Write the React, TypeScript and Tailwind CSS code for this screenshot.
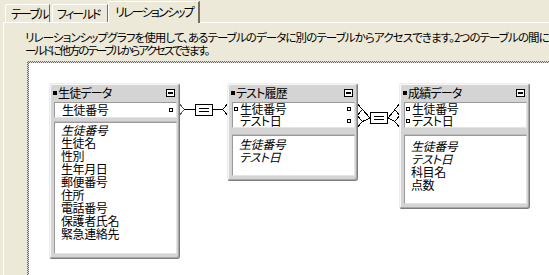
import React from "react";

type KeyRow = { text: string; l?: boolean; r?: boolean };
type BodyRow = { text: string; i?: boolean };
type BoxProps = {
  pos: string;
  title: string;
  keys: KeyRow[];
  body: BodyRow[];
  sep: string;
  bodyH: string;
  keyPad: string;
  bodyPad: string;
};

function Sq() {
  return <span className="block w-[4px] h-[4px] border border-black bg-white shrink-0" />;
}

function TableBox({ pos, title, keys, body, sep, bodyH, keyPad, bodyPad }: BoxProps) {
  return (
    <div
      className={`absolute w-[131px] rounded-[3px] bg-[#d4d4d4] border border-t-[#ececec] border-l-[#ececec] border-r-[#7c7c7c] border-b-[#7c7c7c] shadow-[inset_-1px_-1px_0_#a8a8a8,inset_1px_1px_0_#f8f8f8] pl-[4px] pr-[2px] pb-[4px] [font-feature-settings:'palt'] ${pos}`}
    >
      <div className="h-[18px] flex items-center">
        <span className="block w-[4px] h-[4px] bg-black mr-[1px] ml-[-1px] shrink-0" />
        <span className="leading-[12px] text-[12px] whitespace-nowrap tracking-[-0.8px]">{title}</span>
        <span className="ml-auto mr-[2px] w-[9px] h-[8px] border border-black bg-white flex items-center justify-center">
          <span className="block w-[5px] h-[2px] bg-black" />
        </span>
      </div>
      <div className={`bg-white border border-t-[#9a9a9a] border-l-[#9a9a9a] border-r-[#e4e4e4] border-b-[#e4e4e4] ${keyPad}`}>
        {keys.map((k, idx) => (
          <div key={idx} className="h-[12px] flex items-center pl-[1px] pr-[3px]">
            <span className="w-[6px] flex items-center shrink-0">{k.l ? <Sq /> : null}</span>
            <span className="leading-[12px] text-[12px] whitespace-nowrap tracking-[-0.4px]">{k.text}</span>
            <span className="ml-auto">{k.r ? <Sq /> : null}</span>
          </div>
        ))}
      </div>
      <div className={`${sep} border-b border-b-[#bdbdbd]`} />
      <div className={`bg-white border border-t-[#9a9a9a] border-l-[#9a9a9a] border-r-[#e4e4e4] border-b-[#e4e4e4] pl-[6px] ${bodyH} ${bodyPad}`}>
        {body.map((b, idx) => (
          <div key={idx} className={`h-[13px] leading-[13px] text-[12px] whitespace-nowrap tracking-[-0.4px] ${b.i ? "italic" : ""}`}>
            {b.text}
          </div>
        ))}
      </div>
    </div>
  );
}

function Connectors() {
  return (
    <svg
      className="absolute left-0 top-0 pointer-events-none z-20"
      width={549}
      height={275}
      viewBox="0 0 549 275"
      shapeRendering="crispEdges"
    >
      <g stroke="#000" strokeWidth={1} fill="none">
        {/* connector 1 */}
        <polyline points="180,104.5 184.5,109.5 180,114.5" stroke="#555" />
        <line x1={184} y1={109.5} x2={195} y2={109.5} />
        <rect x={195.5} y={104.5} width={17} height={11} fill="#fff" />
        <line x1={199} y1={108.5} x2={209} y2={108.5} />
        <line x1={199} y1={111.5} x2={209} y2={111.5} />
        <line x1={213} y1={109.5} x2={222} y2={109.5} />
        <polyline points="227,104.5 222.5,109.5 227,114.5" />
        {/* connector 2 */}
        <polyline points="358,104.5 362.5,109.5 358,114.5" />
        <polyline points="358,116.5 362.5,121.5 358,126.5" />
        <line x1={362.5} y1={109.5} x2={370} y2={118} />
        <line x1={362.5} y1={121.5} x2={370} y2={118} />
        <rect x={370.5} y={112.5} width={17} height={11} fill="#fff" />
        <line x1={374} y1={116.5} x2={384} y2={116.5} />
        <line x1={374} y1={119.5} x2={384} y2={119.5} />
        <line x1={388} y1={118} x2={395} y2={109.5} />
        <line x1={388} y1={118} x2={395} y2={121.5} />
        <polyline points="399,104.5 394.5,109.5 399,114.5" />
        <polyline points="399,116.5 394.5,121.5 399,126.5" />
      </g>
    </svg>
  );
}

export default function App() {
  return (
    <div className="relative w-[549px] h-[275px] overflow-hidden bg-[#ECE9D8] text-black font-['Noto_Sans_CJK_JP',sans-serif] text-[12px]">
      {/* tabs */}
      <div className="flex items-end h-[22px] pl-[5px] [font-feature-settings:'palt'] tracking-[-1.8px]">
        <div className="h-[18px] w-[45px] border-l border-t border-white border-r border-r-[#716f64] rounded-tl-[2px] flex items-center pl-[5px] leading-[12px] whitespace-nowrap">
          テーブル
        </div>
        <div className="h-[18px] w-[56px] ml-[2px] border-l border-t border-white border-r border-r-[#716f64] rounded-tl-[2px] flex items-center pl-[4px] leading-[12px] whitespace-nowrap">
          フィールド
        </div>
        <div className="relative z-10 h-[22px] -mb-px w-[92px] bg-[#ECE9D8] border-l border-t border-white border-r-2 border-r-[#716f64] rounded-tl-[2px] flex items-start pt-[4px] pl-[6px] leading-[12px] whitespace-nowrap">
          リレーションシップ
        </div>
      </div>
      {/* panel */}
      <div className="ml-[3px] border-t border-l border-white h-[400px]">
        <div className="pt-[8px] pl-[21px] leading-[13px] whitespace-nowrap [font-feature-settings:'palt'] text-[11.5px]">
          <div className="tracking-[-0.9px]">リレーションシップグラフを使用して、あるテーブルのデータに別のテーブルからアクセスできます。2つのテーブルの間にリレーションシップを作成すると、一方のテーブルのフィ</div>
          <div className="tracking-[-2px]">ールドに他方のテーブルからアクセスできます。</div>
        </div>
        <div className="mt-[4px] ml-[23px] w-[700px] h-[400px] pt-[2px] pl-[2px] bg-[repeating-conic-gradient(#6e6e6e_0_25%,#d8d8d8_0_50%)] bg-[length:2px_2px]">
          <div className="relative w-full h-full bg-white">
            <TableBox
              pos="left-[20px] top-[20px]"
              title="生徒データ"
              keys={[{ text: "生徒番号", r: true }]}
              body={[
                { text: "生徒番号", i: true },
                { text: "生徒名" },
                { text: "性別" },
                { text: "生年月日" },
                { text: "郵便番号" },
                { text: "住所" },
                { text: "電話番号" },
                { text: "保護者氏名" },
                { text: "緊急連絡先" },
              ]}
              sep="h-[4px]"
              bodyH="h-[132px]"
              keyPad="py-[1px]"
              bodyPad="pt-[0px]"
            />
            <TableBox
              pos="left-[198px] top-[20px]"
              title="テスト履歴"
              keys={[
                { text: "生徒番号", l: true, r: true },
                { text: "テスト日", r: true },
              ]}
              body={[
                { text: "生徒番号", i: true },
                { text: "テスト日", i: true },
              ]}
              sep="h-[7px]"
              bodyH="h-[41px]"
              keyPad="py-0"
              bodyPad="pt-[1px]"
            />
            <TableBox
              pos="left-[370px] top-[20px]"
              title="成績データ"
              keys={[
                { text: "生徒番号", l: true },
                { text: "テスト日", l: true },
              ]}
              body={[
                { text: "生徒番号", i: true },
                { text: "テスト日", i: true },
                { text: "科目名" },
                { text: "点数" },
              ]}
              sep="h-[7px]"
              bodyH="h-[69px]"
              keyPad="py-0"
              bodyPad="pt-[3px]"
            />
          </div>
        </div>
      </div>
      <Connectors />
    </div>
  );
}
